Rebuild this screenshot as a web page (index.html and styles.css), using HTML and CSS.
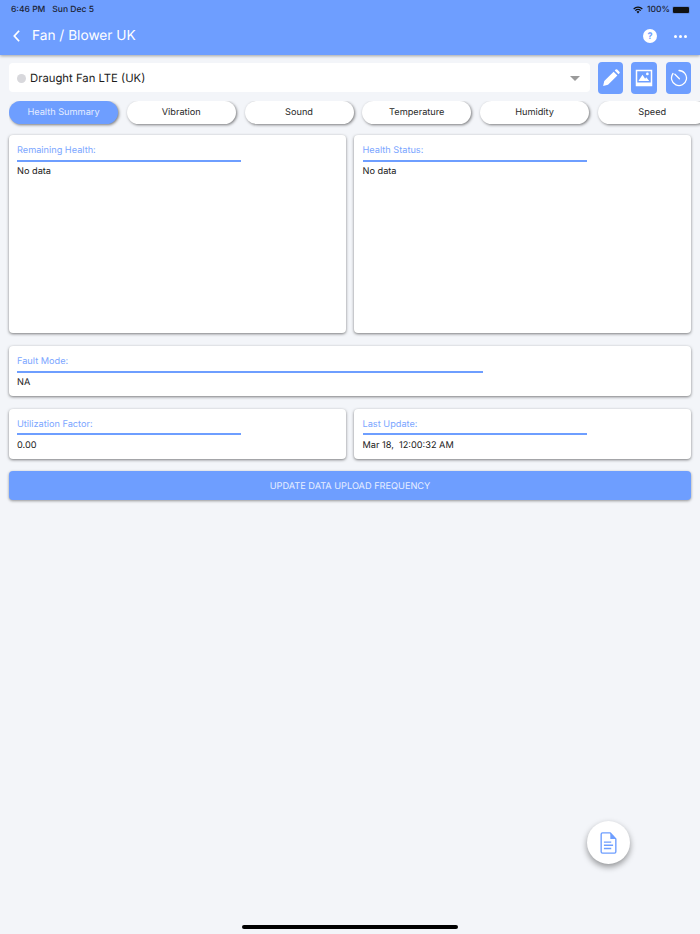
FILE: index.html
```html
<!DOCTYPE html>
<html lang="en">
<head>
<meta charset="utf-8">
<title>Fan / Blower UK</title>
<link rel="stylesheet" href="styles.css">
</head>
<body>
<header class="header">
  <div class="status">
    <div class="status-left"><span>6:46 PM</span><span>Sun Dec 5</span></div>
    <div class="status-right">
      <svg class="wifi" viewBox="0 0 16 12"><path d="M8 11.500 5.600 8.900a3.400 3.400 0 0 1 4.800 0zM4.400 7.700 3 6.200a7 7 0 0 1 10 0l-1.400 1.500a5 5 0 0 0-7.200 0zM1.800 5 .4 3.500a10.700 10.700 0 0 1 15.200 0L14.200 5a8.700 8.700 0 0 0-12.400 0z"/></svg>
      <span>100%</span>
      <span class="battery"><span class="battery-fill"></span></span>
    </div>
  </div>
  <div class="nav">
    <div class="nav-left">
      <svg class="back" viewBox="0 0 10 16"><path d="M8 2 2.500 8 8 14"/></svg>
      <span class="title">Fan / Blower UK</span>
    </div>
    <div class="nav-right">
      <span class="help">?</span>
      <span class="more"><i></i><i></i><i></i></span>
    </div>
  </div>
</header>

<main class="main">
  <div class="toolbar">
    <div class="select">
      <span class="dot"></span>
      <span class="select-text">Draught Fan LTE (UK)</span>
      <span class="caret"></span>
    </div>
    <button class="tool tool-a"><svg viewBox="0 0 24 24"><path d="M1.500 22.500 3 16 15.500 3.500l5 5L8 21zM17 2l1.200-1.200a1.500 1.500 0 0 1 2.100 0l2.900 2.900a1.500 1.500 0 0 1 0 2.100L22 7z" fill="#fff"/></svg></button>
    <button class="tool tool-b"><svg viewBox="0 0 24 24"><path fill-rule="evenodd" d="M1 1h22v22H1zM3 3v15h18V3z" fill="#fff"/><path d="M4.500 16 10 7.500l3.500 5.500 1.500-2 4 5z" fill="#fff"/><circle cx="16.500" cy="6.500" r="1.800" fill="#fff"/></svg></button>
    <button class="tool tool-c"><svg viewBox="0 0 24 24"><path d="M12 2a10 10 0 1 1-8 4M6.500 7l6 6" fill="none" stroke="#fff" stroke-width="1.700" stroke-linecap="round"/></svg></button>
  </div>

  <nav class="tabs">
    <span class="tab active">Health Summary</span>
    <span class="tab">Vibration</span>
    <span class="tab">Sound</span>
    <span class="tab">Temperature</span>
    <span class="tab">Humidity</span>
    <span class="tab">Speed</span>
  </nav>

  <section class="row">
    <div class="card tall"><div class="label">Remaining Health:</div><div class="rule"></div><div class="value">No data</div></div>
    <div class="card tall"><div class="label">Health Status:</div><div class="rule"></div><div class="value">No data</div></div>
  </section>

  <section class="row row-fault">
    <div class="card"><div class="label">Fault Mode:</div><div class="rule rule-wide"></div><div class="value">NA</div></div>
  </section>

  <section class="row row-util">
    <div class="card"><div class="label">Utilization Factor:</div><div class="rule"></div><div class="value">0.00</div></div>
    <div class="card"><div class="label">Last Update:</div><div class="rule"></div><div class="value">Mar 18,&nbsp; 12:00:32 AM</div></div>
  </section>

  <button class="update">UPDATE DATA UPLOAD FREQUENCY</button>
</main>

<button class="fab"><svg viewBox="0 0 18 24"><path d="M1 2.500A1.500 1.500 0 0 1 2.500 1H11l6 6.500v14a1.500 1.500 0 0 1-1.500 1.500h-13A1.500 1.500 0 0 1 1 21.500z" fill="none" stroke="#6e9eff" stroke-width="1.500" stroke-linejoin="round"/><path d="M11 1v6.500h6z" fill="#6e9eff"/><path d="M4 11h8M4 14.500h10M4 18h8" stroke="#6e9eff" stroke-width="1.500"/></svg></button>
<div class="home-bar"></div>
</body>
</html>
```
FILE: styles.css
```css
* { box-sizing: border-box; }
html, body { height: 100%; }
body {
  margin: 0;
  width: 700px;
  height: 934px;
  overflow: hidden;
  position: relative;
  background: #f3f5f9;
  font-family: Inter, "Liberation Sans", sans-serif;
  text-rendering: geometricPrecision;
  color: #222;
}
.header {
  height: 55px;
  background: #6e9eff;
  box-shadow: 0 1px 3px rgba(0,0,0,.35);
  color: #fff;
}
.status {
  height: 17px;
  padding: 2px 10px 0 11px;
  display: flex;
  justify-content: space-between;
  align-items: center;
  font-size: 8.500px;
  font-weight: 500;
  color: #1a2233;
}
.status-left { display: flex; gap: 7px; }
.status-right { display: flex; align-items: center; gap: 2px; }
.wifi { width: 10px; height: 8px; fill: #111; margin-right: 2px; }
.battery {
  width: 18px;
  height: 8px;
  border-radius: 2px;
  padding: 1px;
  background: rgba(0,0,0,.12);
  display: block;
}
.battery-fill { display: block; width: 100%; height: 100%; background: #111; border-radius: 1px; }
.nav {
  height: 37px;
  padding: 1px 12px 0;
  display: flex;
  justify-content: space-between;
  align-items: center;
}
.nav-left { display: flex; align-items: center; gap: 11px; }
.back { width: 9px; height: 14px; fill: none; stroke: #fff; stroke-width: 2; }
.title { font-size: 13.700px; }
.nav-right { display: flex; align-items: center; gap: 17px; }
.help {
  width: 14px;
  height: 14px;
  border-radius: 50%;
  background: #fff;
  color: #6e9eff;
  font-size: 9px;
  font-weight: 700;
  display: flex;
  align-items: center;
  justify-content: center;
}
.more { display: flex; gap: 2px; margin-right: 1px; }
.more i { width: 3px; height: 3px; border-radius: 50%; background: #fff; display: block; }
.main { padding: 6px 0 0 9px; }
.toolbar { display: flex; align-items: center; height: 33px; }
.select {
  width: 581px;
  height: 29px;
  background: #fff;
  border-radius: 4px;
  display: flex;
  align-items: center;
  padding: 1px 10px 0 8px;
}
.dot { width: 9px; height: 9px; border-radius: 50%; background: #d8d8dc; margin-right: 4px; }
.select-text { font-size: 11.300px; flex: 1; color: #1c1c1c; }
.caret { width: 0; height: 0; border-left: 5px solid transparent; border-right: 5px solid transparent; border-top: 5px solid #9a9a9a; }
.tool {
  width: 25px;
  height: 32px;
  padding: 0;
  border: 0;
  border-radius: 4px;
  background: #6e9eff;
  display: flex;
  align-items: center;
  justify-content: center;
  margin-left: 9px;
}
.tool svg { width: 18px; height: 18px; }
.tool-a { margin-left: 8px; }
.tool-b { width: 26px; margin-left: 8px; }
.tabs {
  display: flex;
  gap: 8.750px;
  margin-top: 7px;
  overflow: hidden;
  padding-bottom: 4px;
}
.tab {
  flex: 0 0 109px;
  height: 23px;
  border-radius: 12px;
  background: #fff;
  box-shadow: 1px 1px 3px rgba(0,0,0,.5);
  font-size: 9.200px;
  display: flex;
  align-items: center;
  justify-content: center;
  color: #2a2a2a;
}
.tab.active { background: #6e9eff; color: #e4ecff; }
.row { display: flex; gap: 8px; width: 682px; }
.tabs + .row { margin-top: 7px; }
.card {
  flex: 1;
  background: #fff;
  border-radius: 4px;
  box-shadow: 0 1px 3px rgba(0,0,0,.5);
  padding: 10px 8px 0;
  height: 50px;
}
.card + .card { padding-left: 9px; }
.card.tall { height: 198px; }
.label { font-size: 9.200px; line-height: 11px; color: #7ba6ff; }
.rule { width: 224px; height: 2px; background: #6e9eff; margin-top: 3.500px; }
.rule-wide { width: 466px; }
.value { font-size: 9.200px; line-height: 12px; margin-top: 4.500px; color: #222; }
.row-fault { margin-top: 13px; }
.row-util { margin-top: 12.500px; }
.update {
  display: block;
  width: 682px;
  height: 29px;
  margin-top: 12.500px;
  padding: 1px 0 0;
  border: 0;
  border-radius: 4px;
  background: #6e9eff;
  color: #e8efff;
  box-shadow: 0 1px 3px rgba(0,0,0,.4);
  font-family: inherit;
  text-rendering: inherit;
  font-size: 9.200px;
}
.fab {
  position: absolute;
  left: 587px;
  top: 821px;
  width: 43px;
  height: 43px;
  border: 0;
  padding: 0;
  border-radius: 50%;
  background: #fff;
  box-shadow: 0 3px 6px rgba(0,0,0,.4);
  display: flex;
  align-items: center;
  justify-content: center;
}
.fab svg { width: 17px; height: 22px; }
.home-bar {
  position: absolute;
  left: 242px;
  top: 925px;
  width: 216px;
  height: 4px;
  border-radius: 2px;
  background: #000;
}
```
